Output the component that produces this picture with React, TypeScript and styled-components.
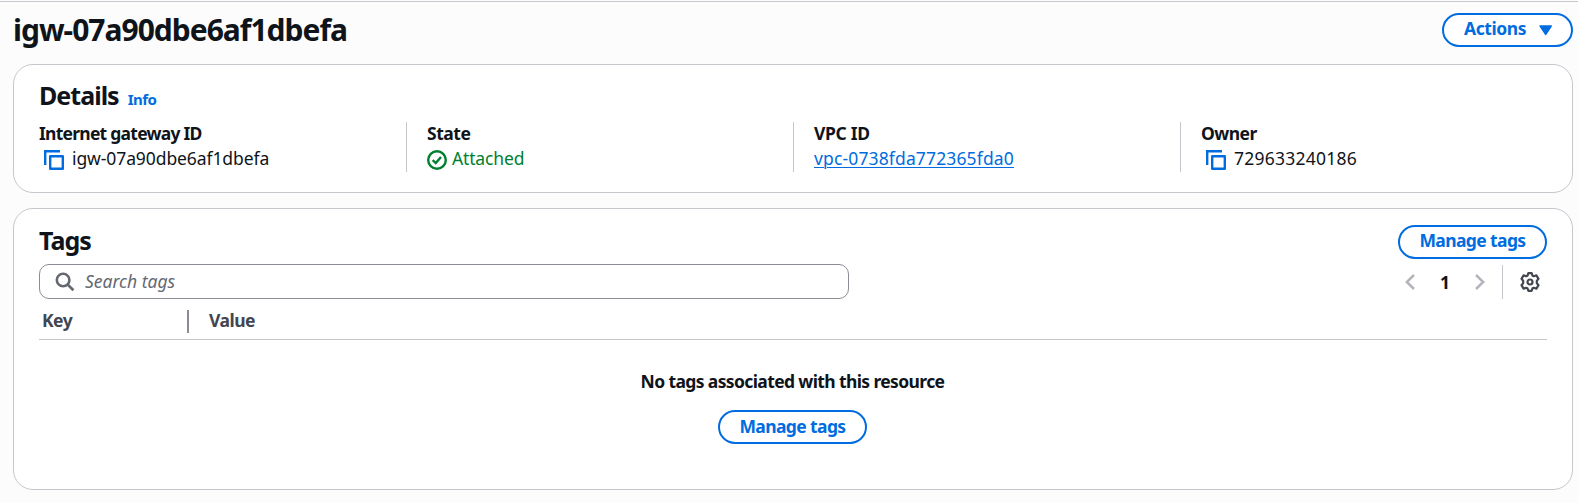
import React from 'react';
import styled, { createGlobalStyle } from 'styled-components';

const GlobalStyle = createGlobalStyle`
  *, *::before, *::after { box-sizing: border-box; }
  body {
    margin: 0;
    background: #fcfcfd;
    color: #0f141a;
    font-family: "Noto Sans", "Open Sans", sans-serif;
    font-size: 17.5px;
  }
  button, input { font-family: inherit; }
`;

const blue = '#006ce0';
const border = '#c6c6cd';

const Page = styled.main`
  min-height: 503px;
  padding: 1px 0 0;
`;

const Content = styled.div`
  border-top: 1px solid ${border};
  padding: 0 5px 0 13px;
  display: flex;
  flex-direction: column;
`;

const PageHeader = styled.header`
  display: flex;
  justify-content: space-between;
  align-items: flex-start;
  height: 62px;
  padding-top: 11px;
`;

const PageTitle = styled.h1`
  margin: -2px 0 0;
  font-size: 30px;
  line-height: 38px;
  font-weight: 700;
  letter-spacing: -1px;
`;

const Button = styled.button<{ $width: number; $line?: number }>`
  display: flex;
  align-items: flex-start;
  justify-content: center;
  height: 34px;
  flex: none;
  width: ${(p) => p.$width}px;
  padding: 0;
  border: 2px solid ${blue};
  border-radius: 20px;
  background: #fff;
  color: ${blue};
  font-size: 17.5px;
  font-weight: 700;
  line-height: ${(p) => p.$line ?? 26}px;
  letter-spacing: -0.62px;
`;

const ActionsLabel = styled.span`
  letter-spacing: -0.42px;
  margin: 0 13px 0 2px;
`;

const Caret = styled.svg`
  margin-top: 10px;
`;

const Card = styled.section<{ $height: number; $top?: number }>`
  height: ${(p) => p.$height}px;
  margin-top: ${(p) => p.$top ?? 0}px;
  padding: 15px 25px 0;
  border: 1px solid ${border};
  border-radius: 20px;
  background: #fff;
`;

const CardHeader = styled.div`
  display: flex;
  align-items: baseline;
  height: 42px;
`;

const CardTitle = styled.h2`
  margin: 0;
  font-size: 25px;
  line-height: 30px;
  font-weight: 700;
  letter-spacing: -0.98px;
`;

const InfoLink = styled.a`
  margin-left: 9px;
  color: ${blue};
  font-size: 15px;
  font-weight: 700;
  letter-spacing: -0.5px;
`;

const Columns = styled.div`
  display: grid;
  grid-template-columns: 367px 387px 387px 1fr;
  height: 50px;
`;

const Column = styled.div`
  display: flex;
  flex-direction: column;
  gap: 2px;
  & + & {
    border-left: 1px solid ${border};
    padding-left: 20px;
  }
`;

const Label = styled.div<{ $track: number }>`
  font-weight: 700;
  line-height: 22px;
  letter-spacing: ${(p) => p.$track}px;
`;

const Value = styled.div<{ $track: number; $color?: string }>`
  display: flex;
  align-items: center;
  height: 25px;
  line-height: 25px;
  color: ${(p) => p.$color ?? 'inherit'};
  letter-spacing: ${(p) => p.$track}px;
`;

const Link = styled.a`
  color: ${blue};
  text-decoration: underline;
  text-decoration-thickness: 1px;
  text-underline-offset: 2px;
`;

const CopySvg = styled.svg`
  flex: none;
  margin: 2px 8px 0 5px;
`;

const StatusSvg = styled.svg`
  flex: none;
  margin: 2px 5px 0 0;
`;

const TagsHeader = styled.div`
  display: flex;
  justify-content: space-between;
  height: 40px;
  padding-top: 1px;
`;

const Toolbar = styled.div`
  display: flex;
  justify-content: space-between;
  height: 35px;
`;

const Search = styled.label`
  display: flex;
  align-items: center;
  width: 810px;
  height: 35px;
  padding-left: 15px;
  border: 1px solid #8c8c94;
  border-radius: 10px;
`;

const SearchInput = styled.input`
  flex: 1;
  margin: 0 12px 0 10px;
  padding: 0;
  border: 0;
  outline: 0;
  background: transparent;
  font-size: 17.5px;
  font-style: italic;
  line-height: 25px;
  &::placeholder { color: #656871; opacity: 1; }
`;

const Pager = styled.div`
  display: flex;
  align-items: center;
`;

const PageNumber = styled.span`
  width: 60px;
  text-align: center;
  font-weight: 700;
`;

const PagerRule = styled.span`
  width: 1px;
  height: 34px;
  margin: 0 17px;
  background: ${border};
`;

const GearSvg = styled.svg`
  margin-right: 7px;
`;

const TableHead = styled.div`
  display: flex;
  height: 41px;
  padding: 11px 0 0 3px;
  border-bottom: 1px solid ${border};
  color: #424650;
  font-weight: 700;
  line-height: 20px;
  letter-spacing: -0.5px;
`;

const HeadCell = styled.div<{ $width?: number }>`
  width: ${(p) => (p.$width ? `${p.$width}px` : 'auto')};
  height: 23px;
  & + & {
    border-left: 2px solid #8c8c94;
    padding-left: 20px;
  }
`;

const Empty = styled.div`
  display: flex;
  flex-direction: column;
  align-items: center;
  gap: 16px;
  padding: 29px 1px 0 0;
`;

const EmptyText = styled.div`
  font-weight: 700;
  line-height: 25px;
  letter-spacing: -0.62px;
`;

const CopyIcon = () => (
  <CopySvg width="20" height="20" viewBox="0 0 20 20" fill="none" stroke={blue} strokeWidth="2.4">
    <path d="M1.2 15V1.2H16" />
    <path d="M6.2 6.2H18.8V18.8H6.2Z" strokeLinejoin="round" />
  </CopySvg>
);

export default function App() {
  return (
    <Page>
      <GlobalStyle />
      <Content>
        <PageHeader>
          <PageTitle>igw-07a90dbe6af1dbefa</PageTitle>
          <Button $width={131}>
            <ActionsLabel>Actions</ActionsLabel>
            <Caret width="14" height="11" viewBox="0 0 14 11" fill={blue}>
              <path d="M1.2 1H12.2L6.7 9.3Z" stroke={blue} strokeWidth="1.6" strokeLinejoin="round" />
            </Caret>
          </Button>
        </PageHeader>

        <Card $height={129}>
          <CardHeader>
            <CardTitle>Details</CardTitle>
            <InfoLink>Info</InfoLink>
          </CardHeader>
          <Columns>
            <Column>
              <Label $track={-0.75}>Internet gateway ID</Label>
              <Value $track={-0.09}><CopyIcon />igw-07a90dbe6af1dbefa</Value>
            </Column>
            <Column>
              <Label $track={-0.45}>State</Label>
              <Value $track={-0.15} $color="#00802f">
                <StatusSvg width="20" height="20" viewBox="0 0 20 20" fill="none" stroke="#00802f" strokeWidth="2.4">
                  <circle cx="10" cy="10" r="8.8" />
                  <path d="M5.6 10.2L8.8 13.1L14 7" />
                </StatusSvg>
                Attached
              </Value>
            </Column>
            <Column>
              <Label $track={-0.33}>VPC ID</Label>
              <Value $track={0.14}><Link>vpc-0738fda772365fda0</Link></Value>
            </Column>
            <Column>
              <Label $track={-0.54}>Owner</Label>
              <Value $track={0.24}><CopyIcon />729633240186</Value>
            </Column>
          </Columns>
        </Card>

        <Card $height={282} $top={15}>
          <TagsHeader>
            <CardTitle>Tags</CardTitle>
            <Button $width={149}>Manage tags</Button>
          </TagsHeader>
          <Toolbar>
            <Search>
              <svg width="20" height="20" viewBox="0 0 20 20" fill="none" stroke="#656871" strokeWidth="2.6">
                <circle cx="8.1" cy="8" r="6.3" />
                <path d="M12.6 12.5L18.4 18.2" />
              </svg>
              <SearchInput placeholder="Search tags" />
            </Search>
            <Pager>
              <svg width="10" height="16" viewBox="0 0 10 16" fill="none" stroke="#b4b4bb" strokeWidth="2.5">
                <path d="M9 1L1.8 8L9 15" />
              </svg>
              <PageNumber>1</PageNumber>
              <svg width="10" height="16" viewBox="0 0 10 16" fill="none" stroke="#b4b4bb" strokeWidth="2.5">
                <path d="M1 1L8.2 8L1 15" />
              </svg>
              <PagerRule />
              <GearSvg width="20" height="20" viewBox="0 0 20 20" fill="none" stroke="#424650" strokeWidth="2.2" strokeLinejoin="round">
                <path d="M8.3 1.2H11.7L12.4 3.5L13.7 4.2L16.4 3.4L18.5 6.8L16.8 8.9V11.1L18.5 13.2L16.4 16.6L13.7 15.8L12.4 16.5L11.7 18.8H8.3L7.6 16.5L6.3 15.8L3.6 16.6L1.5 13.2L3.2 11.1V8.9L1.5 6.8L3.6 3.4L6.3 4.2L7.6 3.5Z" />
                <circle cx="10" cy="10" r="2.5" />
              </GearSvg>
            </Pager>
          </Toolbar>
          <TableHead>
            <HeadCell $width={145}>Key</HeadCell>
            <HeadCell>Value</HeadCell>
          </TableHead>
          <Empty>
            <EmptyText>No tags associated with this resource</EmptyText>
            <Button $width={149} $line={28}>Manage tags</Button>
          </Empty>
        </Card>
      </Content>
    </Page>
  );
}
